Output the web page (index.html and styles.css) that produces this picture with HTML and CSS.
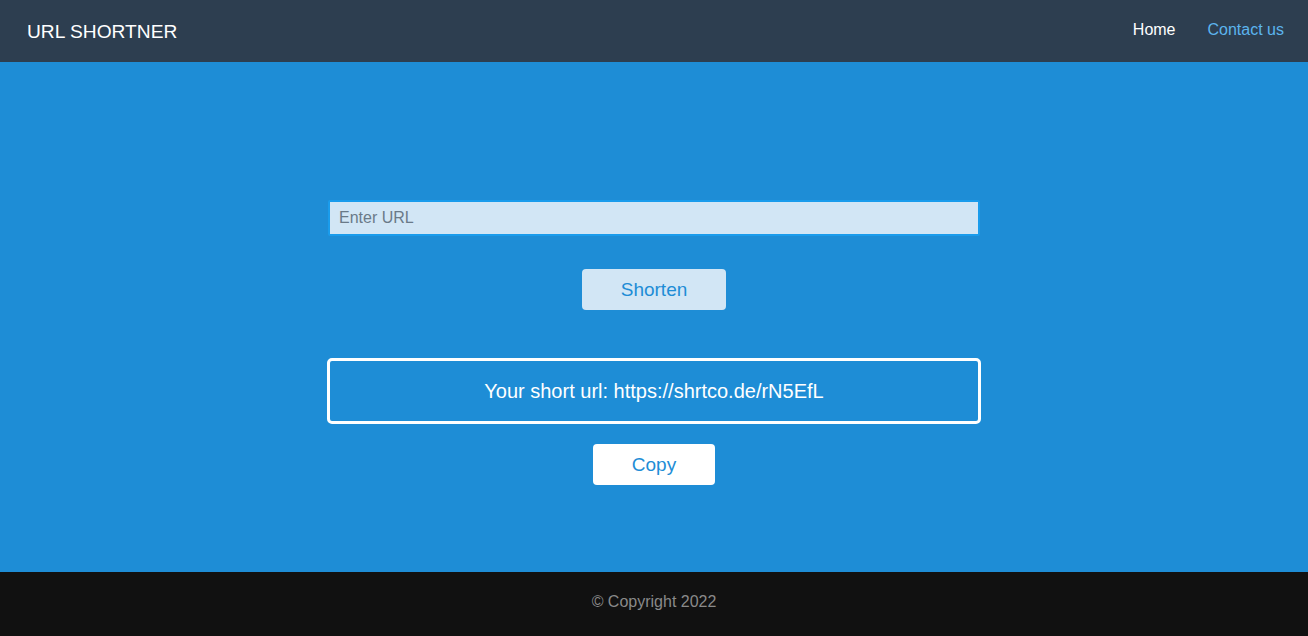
FILE: index.html
```html
<!DOCTYPE html>
<html lang="en">
<head>
<meta charset="utf-8">
<title>URL Shortner</title>
<link rel="stylesheet" href="styles.css">
</head>
<body>
<header class="navbar">
  <div class="brand">URL SHORTNER</div>
  <nav class="nav-links">
    <a class="nav-link nav-home" href="#">Home</a>
    <a class="nav-link nav-contact" href="#">Contact us</a>
  </nav>
</header>
<main class="main">
  <input class="url-input" type="text" placeholder="Enter URL">
  <button class="btn btn-shorten">Shorten</button>
  <div class="result">Your short url: https://shrtco.de/rN5EfL</div>
  <button class="btn btn-copy">Copy</button>
</main>
<footer class="footer">© Copyright 2022</footer>
</body>
</html>
```
FILE: styles.css
```css
* { box-sizing: border-box; }
html, body { margin: 0; padding: 0; }
body {
  font-family: "Liberation Sans", Arial, sans-serif;
  background: #1e8dd6;
}
.navbar {
  height: 62px;
  background: #2d3e50;
  display: flex;
  align-items: center;
  justify-content: space-between;
  padding: 0 24px 0 27px;
}
.brand {
  color: #ffffff;
  font-size: 19.2px;
  padding-top: 1px;
}
.nav-links {
  display: flex;
  gap: 32px;
  padding-bottom: 3px;
}
.nav-link {
  font-size: 16px;
  text-decoration: none;
}
.nav-home { color: #ffffff; }
.nav-contact { color: #5cb4ee; }
.main {
  height: 510px;
  background: #1e8dd6;
  display: flex;
  flex-direction: column;
  align-items: center;
  padding-top: 138px;
}
.url-input {
  width: 652px;
  height: 36px;
  background: #d2e6f5;
  border: 2px solid #1a9cec;
  border-radius: 2px;
  padding: 0 9px;
  font-family: "Liberation Sans", Arial, sans-serif;
  font-size: 16px;
  color: #333;
  outline: none;
}
.url-input::placeholder { color: #6a7a88; }
.btn {
  height: 41px;
  border: none;
  border-radius: 4px;
  font-family: "Liberation Sans", Arial, sans-serif;
  font-size: 19px;
  color: #1e8dd6;
  cursor: pointer;
  padding: 0;
}
.btn-shorten {
  width: 144px;
  margin-top: 33px;
  background: #d2e6f5;
}
.result {
  width: 654px;
  height: 66px;
  margin-top: 48px;
  border: 3px solid #ffffff;
  border-radius: 5px;
  display: flex;
  align-items: center;
  justify-content: center;
  color: #ffffff;
  font-size: 20px;
}
.btn-copy {
  width: 122px;
  margin-top: 20px;
  background: #ffffff;
}
.footer {
  height: 64px;
  background: #111111;
  color: #8a8a8a;
  font-size: 16px;
  display: flex;
  align-items: center;
  justify-content: center;
  padding-bottom: 4px;
}
```
